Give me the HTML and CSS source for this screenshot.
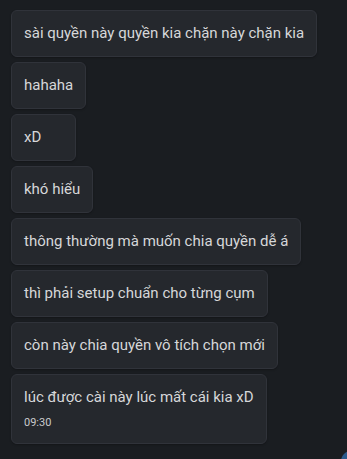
FILE: index.html
```html
<!DOCTYPE html>
<html>
	<head>
		<meta charset="UTF-8">
		<title>chat</title>
		<link rel="stylesheet" href="styles.css">
	</head>
	<body>
		<div class="chat">
			<div class="msg">sài quyền này quyền kia chặn này chặn kia</div>
			<div class="msg">hahaha</div>
			<div class="msg">xD</div>
			<div class="msg">khó hiểu</div>
			<div class="msg">thông thường mà muốn chia quyền dễ á</div>
			<div class="msg">thì phải setup chuẩn cho từng cụm</div>
			<div class="msg">còn này chia quyền vô tích chọn mới</div>
			<div class="msg">
				lúc được cài này lúc mất cái kia xD
				<span class="time">09:30</span>
			</div>
		</div>
		<div class="scroll-btn"></div>
	</body>
</html>
```

FILE: styles.css
```css
html,body{
	margin:0;
	padding:0;
}
body{
	background:#1a1d21;
	font-family:Roboto, "Noto Sans", Arial, sans-serif;
	color:#d6d7d9;
	height:459px;
	overflow:hidden;
	position:relative;
}
.chat{
	display:flex;
	flex-direction:column;
	align-items:flex-start;
	gap:5px;
	padding:10px 0 0 11px;
}
.msg{
	box-sizing:border-box;
	min-width:65px;
	background:#25282d;
	border:1px solid #30333a;
	border-radius:6px;
	padding:12px 12px;
	font-size:15px;
	line-height:21px;
	box-shadow:0 1px 2px rgba(0,0,0,0.25);
}
.msg .time{
	display:block;
	margin-top:7px;
	font-size:11px;
	line-height:16px;
	color:#c9cacc;
}
.scroll-btn{
	position:absolute;
	right:-14px;
	bottom:-12px;
	width:20px;
	height:20px;
	border-radius:50%;
	background:#2a5a8c;
}
```
